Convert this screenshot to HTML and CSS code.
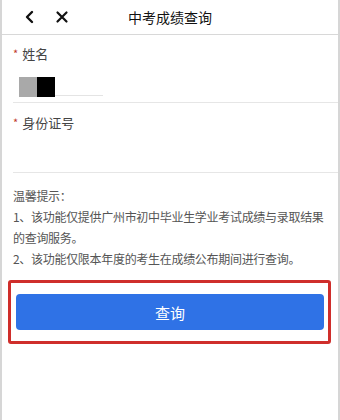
FILE: index.html
```html
<!DOCTYPE html>
<html lang="zh-CN">
<head>
  <meta charset="UTF-8">
  <meta name="viewport" content="width=device-width, initial-scale=1.0">
  <title>中考成绩查询</title>
  <link rel="stylesheet" href="styles.css">
</head>
<body>
  <div class="page">
    <!-- 顶部导航 -->
    <div class="nav-bar">
      <div class="nav-icons">
        <svg class="nav-icon" width="12" height="14" viewBox="0 0 12 14"><path d="M8 2 L3 7 L8 12" fill="none" stroke="#111" stroke-width="2.4" stroke-linecap="round" stroke-linejoin="round"/></svg>
        <svg class="nav-icon" width="14" height="14" viewBox="0 0 14 14"><path d="M2.5 2.5 L11.5 11.5 M11.5 2.5 L2.5 11.5" fill="none" stroke="#111" stroke-width="2.2" stroke-linecap="round"/></svg>
      </div>
      <div class="nav-title">中考成绩查询</div>
    </div>

    <!-- 表单 -->
    <div class="form">
      <div class="field">
        <div class="label"><span class="required">*</span>姓名</div>
        <div class="value">
          <span class="mask mask-grey"></span><span class="mask mask-black"></span><span class="mask-line"></span>
        </div>
      </div>
      <div class="field field-tall">
        <div class="label"><span class="required">*</span>身份证号</div>
      </div>
    </div>

    <!-- 提示 -->
    <div class="tips">
      <p>温馨提示：</p>
      <p>1、该功能仅提供广州市初中毕业生学业考试成绩与录取结果的查询服务。</p>
      <p>2、该功能仅限本年度的考生在成绩公布期间进行查询。</p>
    </div>

    <div class="highlight">
      <button class="submit-btn">查询</button>
    </div>
  </div>
</body>
</html>
```

FILE: styles.css
```css
body {
  margin: 0;
  padding: 0;
  background-color: #fff;
  font-family: "Noto Sans CJK SC", "Noto Sans", sans-serif;
  color: #333;
}

.page {
  height: 420px;
  border-left: 2px solid #d6d6d6;
  border-right: 2px solid #d6d6d6;
  box-sizing: border-box;
}

.nav-bar {
  position: relative;
  height: 34px;
  border-bottom: 1px solid #d8d8d8;
  display: flex;
  align-items: center;
  justify-content: center;
}

.nav-icons {
  position: absolute;
  left: 22px;
  top: 10px;
  display: flex;
  gap: 19px;
}

.nav-icon {
  display: block;
}

.nav-title {
  font-size: 14px;
  color: #111;
  padding-bottom: 1px;
}

.form {
  padding-left: 11px;
}

.field {
  height: 68px;
  border-bottom: 1px solid #e6e6e6;
  box-sizing: border-box;
  padding-top: 9px;
}

.field-tall {
  height: 70px;
  padding-top: 10px;
}

.label {
  font-size: 13px;
  line-height: 18px;
  color: #444;
}

.required {
  color: #c0392b;
  font-size: 11px;
  margin-right: 4px;
  vertical-align: 1px;
}

.value {
  display: flex;
  align-items: flex-end;
  margin-top: 14px;
  padding-left: 6px;
}

.mask {
  display: block;
  width: 18px;
  height: 20px;
}

.mask-grey {
  background-color: #a9a9a9;
}

.mask-black {
  background-color: #000;
}

.mask-line {
  display: block;
  width: 48px;
  height: 1px;
  background-color: #e4e4e4;
  margin-bottom: 1px;
}

.tips {
  padding: 12px 4px 0 11px;
  font-size: 12px;
  line-height: 21px;
  letter-spacing: -0.3px;
  color: #555;
}

.tips p {
  margin: 0;
}

.highlight {
  margin: 11px 7px 0 6px;
  padding: 11px 4px 11px 5px;
  border: 3px solid #cf2e2b;
  border-radius: 3px;
}

.submit-btn {
  display: block;
  width: 100%;
  height: 36px;
  border: none;
  border-radius: 4px;
  background-color: #2f72e6;
  color: #fff;
  font-family: "Noto Sans CJK SC", sans-serif;
  font-size: 15px;
}
```
